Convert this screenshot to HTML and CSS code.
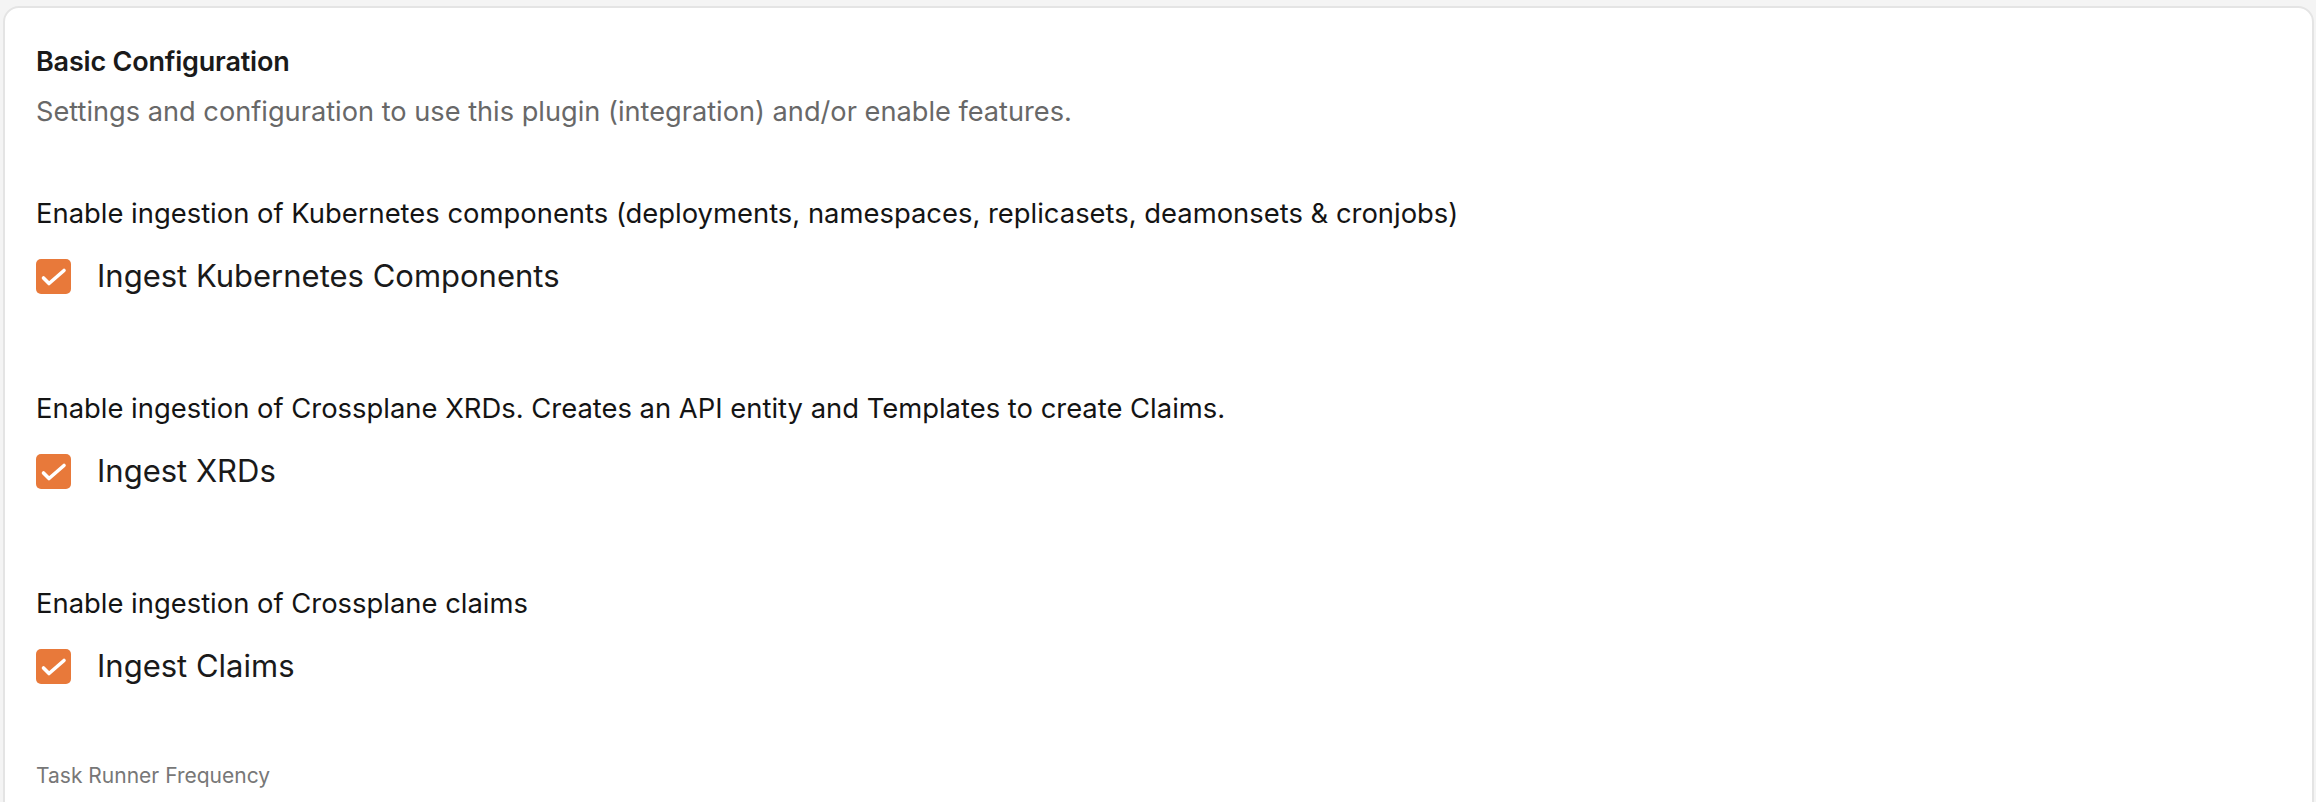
FILE: index.html
```html
<!DOCTYPE html>
<html lang="en">
<head>
<meta charset="utf-8">
<title>Basic Configuration</title>
<link rel="stylesheet" href="styles.css">
</head>
<body>
<div class="card">
  <h2 class="title">Basic Configuration</h2>
  <p class="desc">Settings and configuration to use this plugin (integration) and/or enable features.</p>

  <div class="field">
    <div class="field-label">Enable ingestion of Kubernetes components (deployments, namespaces, replicasets, deamonsets &amp; cronjobs)</div>
    <label class="check">
      <span class="box"><svg viewBox="0 0 35 35" width="35" height="35"><path d="M7.5 19l5.5 5.5L28 11.5" fill="none" stroke="#fff" stroke-width="3.6" stroke-linecap="round" stroke-linejoin="round"/></svg></span>
      <span class="check-text">Ingest Kubernetes Components</span>
    </label>
  </div>

  <div class="field">
    <div class="field-label">Enable ingestion of Crossplane XRDs. Creates an API entity and Templates to create Claims.</div>
    <label class="check">
      <span class="box"><svg viewBox="0 0 35 35" width="35" height="35"><path d="M7.5 19l5.5 5.5L28 11.5" fill="none" stroke="#fff" stroke-width="3.6" stroke-linecap="round" stroke-linejoin="round"/></svg></span>
      <span class="check-text">Ingest XRDs</span>
    </label>
  </div>

  <div class="field">
    <div class="field-label">Enable ingestion of Crossplane claims</div>
    <label class="check">
      <span class="box"><svg viewBox="0 0 35 35" width="35" height="35"><path d="M7.5 19l5.5 5.5L28 11.5" fill="none" stroke="#fff" stroke-width="3.6" stroke-linecap="round" stroke-linejoin="round"/></svg></span>
      <span class="check-text">Ingest Claims</span>
    </label>
  </div>

  <div class="small-label">Task Runner Frequency</div>
</div>
</body>
</html>
```

FILE: styles.css
```css
html, body {
  margin: 0;
  padding: 0;
}
body {
  background: #f4f4f4;
  padding: 6px 2px 0 3px;
  font-family: Inter, "Noto Sans", sans-serif;
  color: #1c1c1c;
  overflow: hidden;
  height: 802px;
  box-sizing: border-box;
}
.card {
  background: #fff;
  border: 2px solid #e4e4e4;
  border-radius: 16px;
  padding: 36px 31px 60px;
  min-height: 900px;
  box-sizing: border-box;
  display: flex;
  flex-direction: column;
  align-items: flex-start;
}
.title {
  margin: 0;
  font-size: 27px;
  line-height: 36px;
  font-weight: 600;
  color: #1a1a1a;
  letter-spacing: -0.2px;
}
.desc {
  margin: 16px 0 0;
  font-size: 27.2px;
  line-height: 32px;
  color: #686868;
}
.field {
  display: flex;
  flex-direction: column;
  align-items: flex-start;
  margin-top: 69px;
}
.field + .field {
  margin-top: 96px;
}
.field-label {
  font-size: 27.4px;
  line-height: 32px;
  font-weight: 400;
  color: #141414;
}
.check {
  display: flex;
  align-items: center;
  gap: 26px;
  margin-top: 27px;
  height: 40px;
}
.box {
  width: 35px;
  height: 35px;
  border-radius: 5px;
  background: #e8793a;
  display: flex;
  align-items: center;
  justify-content: center;
}
.box svg {
  display: block;
}
.check-text {
  font-size: 31px;
  line-height: 40px;
  color: #1a1a1a;
}
.small-label {
  margin-top: 76px;
  font-size: 21px;
  line-height: 28px;
  color: #777;
}
```
